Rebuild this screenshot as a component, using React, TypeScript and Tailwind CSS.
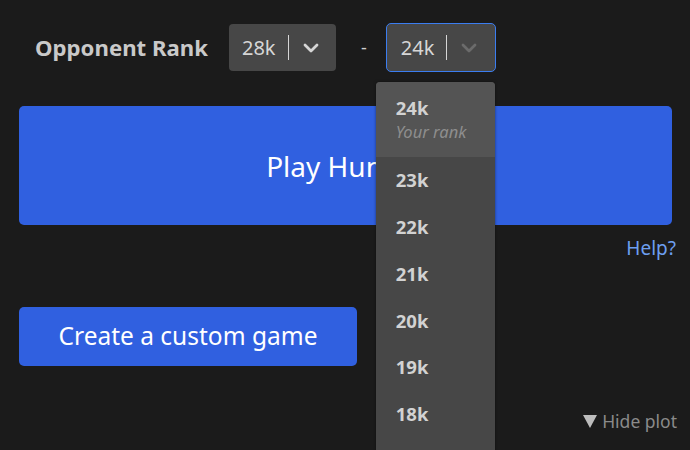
import React from "react";

const Chevron = ({ color }: { color: string }) => (
  <svg width="16" height="10" viewBox="0 0 16 10" fill="none">
    <path d="M2 2 L8 8 L14 2" stroke={color} strokeWidth="2.8" strokeLinecap="round" strokeLinejoin="round" />
  </svg>
);

export default function App() {
  const ranks = ["23k", "22k", "21k", "20k", "19k", "18k"];
  return (
    <div
      className="w-[690px] h-[450px] overflow-hidden bg-[#1b1b1b] text-[#d2d2d2] relative"
      style={{ fontFamily: "'Noto Sans', 'Open Sans', sans-serif" }}
    >
      <div className="px-[19px] pr-[18px] pt-[23px] flex flex-col">
        <div className="flex items-center h-[49px]">
          <div className="ml-[16px] text-[22.2px] font-bold text-[#c9c9c9]">
            Opponent Rank
          </div>
          <div className="ml-[21px] w-[107px] h-[47px] rounded-[4px] bg-[#474747] flex items-center">
            <span className="ml-[13px] text-[20px] text-[#d6d6d6]">28k</span>
            <span className="ml-[12px] w-px h-[25px] bg-[#d6d6d6]" />
            <span className="ml-[14px] flex"><Chevron color="#d6d6d6" /></span>
          </div>
          <div className="ml-[25px] text-[18px] text-[#cfcfcf]">-</div>
          <div className="ml-[19px] w-[110px] h-[49px] rounded-[5px] border border-[#3b7df0] bg-[#474747] flex items-center relative">
            <span className="ml-[14px] text-[20px] text-[#d6d6d6]">24k</span>
            <span className="ml-[12px] w-px h-[25px] bg-[#d6d6d6]" />
            <span className="ml-[14px] flex"><Chevron color="#6b6b6b" /></span>
            <div className="absolute left-[-11px] top-[58px] w-[119px] h-[420px] rounded-[4px] bg-[#474747] shadow-[0_0_3px_rgba(0,0,0,0.5)] z-10 flex flex-col">
              <div className="h-[75px] bg-[#545454] rounded-t-[4px] pl-[20px] pt-[14px] flex flex-col">
                <span className="text-[18.5px] font-bold text-[#d2d2d2] leading-[24px]">24k</span>
                <span className="text-[16.5px] italic text-[#8e8e8e] leading-[24px]">Your rank</span>
              </div>
              {ranks.map((r) => (
                <div key={r} className="h-[46.7px] pl-[20px] flex items-center text-[18.5px] font-bold text-[#d2d2d2]">
                  {r}
                </div>
              ))}
            </div>
          </div>
        </div>
        <div className="mt-[34px] h-[119px] w-[653px] rounded-[5px] bg-[#3060e0] flex items-center justify-center text-white text-[28px]">
          Play Human
        </div>
        <div className="flex justify-end mt-[11px] mr-[-4px] text-[19px] text-[#6d9ff0] leading-[24px]">
          Help?
        </div>
        <div className="mt-[47px] w-[338px] h-[59px] rounded-[5px] bg-[#3060e0] flex items-center justify-center text-white text-[24.5px]">
          Create a custom game
        </div>
        <div className="flex justify-end mt-[42px] mr-[-5px] text-[17.5px] text-[#8a8a8a] items-center gap-[5px]">
          <svg width="14" height="13" viewBox="0 0 14 13">
            <path d="M0 0 H14 L7 13 Z" fill="#bdbdbd" />
          </svg>
          <span>Hide plot</span>
        </div>
      </div>
    </div>
  );
}
